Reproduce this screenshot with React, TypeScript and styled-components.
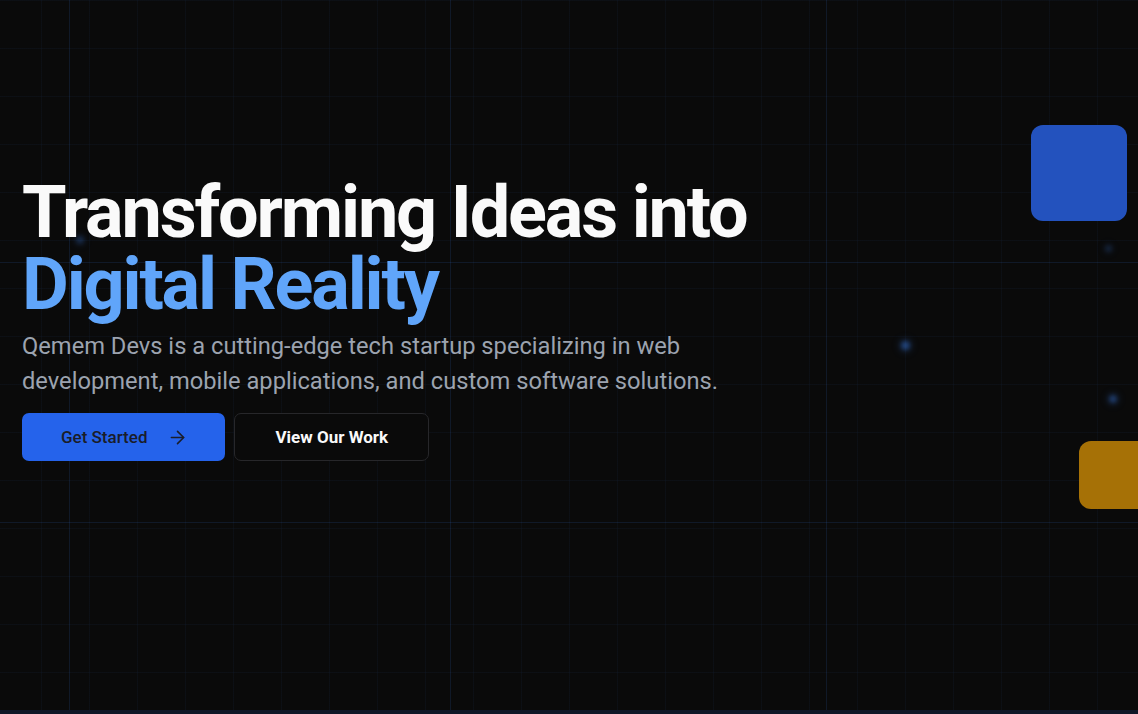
import React from "react";
import styled, { createGlobalStyle } from "styled-components";

const GlobalStyle = createGlobalStyle`
  html, body {
    margin: 0;
    padding: 0;
    background: #0a0a0a;
  }
  * { box-sizing: border-box; }
  #root { min-height: 100vh; }
`;

const Page = styled.div`
  display: flex;
  flex-direction: column;
  width: 100%;
  min-height: 714px;
  background: #0a0a0a;
  font-family: Roboto, "Open Sans", sans-serif;
`;

const Hero = styled.section`
  position: relative;
  height: 710px;
  overflow: hidden;
  background-color: #0a0a0a;
  background-image:
    linear-gradient(to right, rgba(59, 130, 246, 0.045) 1px, transparent 1px),
    linear-gradient(to bottom, rgba(59, 130, 246, 0.045) 1px, transparent 1px);
  background-size: 48px 48px;
  background-position: calc(50% + 24px) 0;
`;

const NextSection = styled.div`
  flex: 1;
  min-height: 4px;
  background: #0f1727;
`;

const Beam = styled.div<{ $vertical?: boolean }>`
  position: absolute;
  pointer-events: none;
  background: rgba(59, 130, 246, 0.13);
  ${(p) =>
    p.$vertical
      ? `top: 0; bottom: 0; width: 1px;`
      : `left: 0; right: 0; height: 1px;`}
`;

const Glow = styled.span<{ $size: number; $alpha: number }>`
  position: absolute;
  width: ${(p) => p.$size}px;
  height: ${(p) => p.$size}px;
  margin: ${(p) => -p.$size / 2}px 0 0 ${(p) => -p.$size / 2}px;
  border-radius: 50%;
  background: rgba(59, 130, 246, ${(p) => p.$alpha});
  filter: blur(2px);
  box-shadow: 0 0 8px rgba(59, 130, 246, ${(p) => p.$alpha * 0.8});
`;

const Shape = styled.div<{ $color: string }>`
  position: absolute;
  border-radius: 12px;
  background: ${(p) => p.$color};
`;

const Content = styled.div`
  position: relative;
  display: flex;
  flex-direction: column;
  align-items: flex-start;
  padding: 177px 0 0 22px;
`;

const Title = styled.h1`
  margin: 0;
  font-family: Roboto, "Open Sans", sans-serif;
  font-size: 72px;
  line-height: 72px;
  font-weight: 700;
  letter-spacing: -0.03em;
  color: #fafafa;
`;

const Accent = styled.span`
  display: block;
  color: #60a5fa;
`;

const Lead = styled.p`
  margin: 8px 0 0;
  max-width: 720px;
  font-size: 23.7px;
  line-height: 35px;
  font-weight: 400;
  color: #9ca3af;
`;

const Actions = styled.div`
  display: flex;
  gap: 9px;
  margin-top: 14px;
`;

const Button = styled.button<{ $primary?: boolean }>`
  display: inline-flex;
  align-items: center;
  justify-content: center;
  gap: 20px;
  height: 48px;
  border-radius: 7px;
  font-family: Roboto, "Open Sans", sans-serif;
  font-size: 17px;
  cursor: pointer;
  ${(p) =>
    p.$primary
      ? `
    padding: 0 37px 0 39px;
    background: #2563eb;
    border: none;
    color: #1a1d29;
    font-weight: 500;
  `
      : `
    padding: 0 40px;
    background: #0a0a0a;
    border: 1px solid #27272a;
    color: #fafafa;
    font-weight: 700;
  `}
`;

const ArrowIcon = () => (
  <svg width="21" height="21" viewBox="0 0 24 24" fill="none" stroke="currentColor" strokeWidth="1.8" strokeLinecap="round" strokeLinejoin="round">
    <path d="M5 12h14" />
    <path d="m12 5 7 7-7 7" />
  </svg>
);

const beams = [
  { vertical: false, at: 262 },
  { vertical: false, at: 522 },
  { vertical: true, at: 69 },
  { vertical: true, at: 450 },
  { vertical: true, at: 826 },
];

const glows = [
  { x: 80, y: 240, s: 8, a: 0.25 },
  { x: 905, y: 345, s: 9, a: 0.45 },
  { x: 1113, y: 399, s: 8, a: 0.4 },
  { x: 1108, y: 248, s: 7, a: 0.2 },
];

export default function App() {
  return (
    <>
      <GlobalStyle />
      <Page>
        <Hero>
          {beams.map((b, i) => (
            <Beam key={i} $vertical={b.vertical} style={b.vertical ? { left: b.at } : { top: b.at }} />
          ))}
          {glows.map((g, i) => (
            <Glow key={i} $size={g.s} $alpha={g.a} style={{ left: g.x, top: g.y }} />
          ))}
          <Shape $color="#2352be" style={{ left: 1031, top: 125, width: 96, height: 96 }} />
          <Shape $color="#a67106" style={{ left: 1079, top: 441, width: 96, height: 68 }} />
          <Content>
            <Title>
              Transforming Ideas into
              <Accent>Digital Reality</Accent>
            </Title>
            <Lead>
              Qemem Devs is a cutting-edge tech startup specializing in web development, mobile
              applications, and custom software solutions.
            </Lead>
            <Actions>
              <Button $primary>
                Get Started
                <ArrowIcon />
              </Button>
              <Button>View Our Work</Button>
            </Actions>
          </Content>
        </Hero>
        <NextSection />
      </Page>
    </>
  );
}
